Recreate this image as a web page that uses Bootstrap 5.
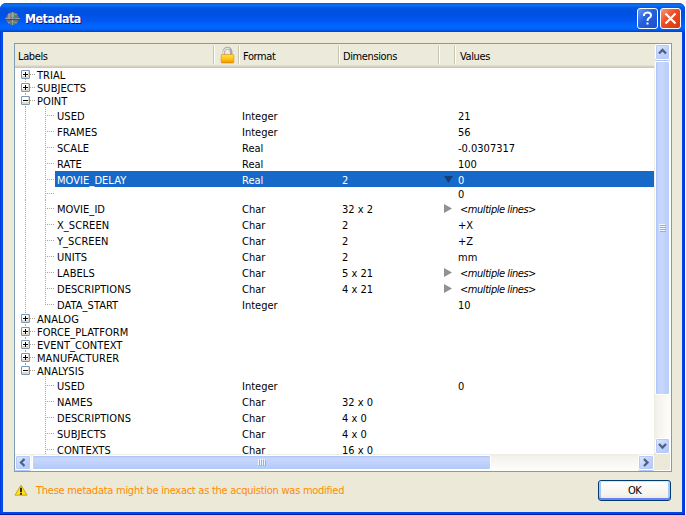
<!DOCTYPE html>
<html lang="en">
<head>
<meta charset="utf-8">
<title>Metadata</title>
<link href="https://cdn.jsdelivr.net/npm/bootstrap@5.3.0/dist/css/bootstrap.min.css" rel="stylesheet">
<style>
body{width:686px;height:515px;overflow:hidden;background:#fff;padding-top:3px;color:#000;font:11px/13px "DejaVu Sans Condensed","DejaVu Sans",sans-serif;font-stretch:condensed}
.defs{position:absolute;width:0;height:0}
.win{width:685px;height:512px;background:linear-gradient(90deg,#0029c8 0,#0050f0 1px,#0048e8 3px,#0048e8 682px,#0030d8 685px);border-radius:6px 6px 0 0;border-bottom:1px solid #0020a0}
.titlebar{height:29px;padding:2px 4px 0 5px;border-radius:6px 6px 0 0;background:linear-gradient(#0058d8 0,#0c73f5 2px,#0055e5 5px,#0050e0 10px,#0056ee 17px,#0066ff 23px,#0064fa 26px,#0040c8 29px)}
.titlebar h1{font:bold 12.3px/16px "DejaVu Sans Condensed","DejaVu Sans",sans-serif;font-stretch:condensed;letter-spacing:-.45px;color:#fff;text-shadow:1px 1px #0f1089;margin-left:5px;padding-top:1px}
.tb{width:21px;height:21px;padding:0;border:1px solid #fff;border-radius:3px;background:linear-gradient(135deg,#6c97f3,#2560dc 45%,#1c50cc)}
.tb.help-w{margin-right:2px}
.tb.close-w{background:linear-gradient(135deg,#f49a7c,#ee4a24 45%,#d8380e)}
.client{width:679px;height:480px;margin-left:3px;padding:11px 11px 0;background:#ece9d8}
.frame{width:658px;height:429px;border:1px solid #7f9db9;background:#fff}
.view{width:639px;height:410px;overflow:hidden}
.thead{height:24px;background:linear-gradient(#ebeadb 21px,#e2decd 21px,#e2decd 22px,#d6d2c2 22px,#d6d2c2 23px,#cbc7b8 23px);letter-spacing:-.38px}
.thead>div{height:18px;margin-top:2px;padding:4px 0 0 4px;border-right:1px solid #fff;box-shadow:inset -1px 0 #c7c5b2}
.thead>div:last-child{border:0;box-shadow:none}
.thead>.cl{width:200px;padding-left:3px}.ck{width:25px}.cf{width:100px}.cd{width:100px}.ca{width:16px}.cv{flex:1}
.thead>.cf,.thead>.cd{padding-left:3px}
.line{height:16px;line-height:20px;white-space:pre}
.line.top-l{height:13px;line-height:15px}
.line.extra{height:13px;line-height:16px}
.gut{width:40px;height:100%;flex:none;background:repeating-linear-gradient(#aca899 0 1px,transparent 1px 2px) 10px 0/1px 100% no-repeat,repeating-linear-gradient(#aca899 0 1px,transparent 1px 2px) 30px 0/1px 100% no-repeat,repeating-linear-gradient(90deg,#aca899 0 1px,transparent 1px 2px) 30px 8px/9px 1px no-repeat}
.end .gut{background-size:1px 100%,1px 8px,9px 1px}
.in .gut{background-size:0 0,1px 100%,9px 1px}
.extra .gut{background-position:10px 0,30px 0,30px 6px}
.top-l .gut{width:20px;padding:2px 0 0 6px;background:repeating-linear-gradient(#aca899 0 1px,transparent 1px 2px) 10px 0/1px 100% no-repeat,repeating-linear-gradient(90deg,#aca899 0 1px,transparent 1px 2px) 15px 6px/5px 1px no-repeat}
.top-l.first .gut{background-position:10px 7px,15px 6px}
.top-l.final .gut{background-size:1px 5px,5px 1px}
.top-l .n{padding-left:2px}
.exp{display:block;width:9px;height:9px}
.cells{flex:1}
.line .n{width:187px;padding-left:2px;letter-spacing:.06px}
.line .f{width:100px}.line .d{width:102px}.line .a{width:14px}
.line span{flex:none}
.sel{background:#1669c8;color:#fff}
.line i{font-style:oblique;padding-left:2px;letter-spacing:-.45px}
.a svg{display:block;margin-top:4px}
.a svg.down{margin-top:3px}
.vbar{width:17px;height:410px;background:linear-gradient(90deg,#eeede5,#f4f3ee 4px,#fefefb)}
.hbar{width:639px;height:17px;background:linear-gradient(#eeede5,#f4f3ee 4px,#fefefb)}
.sb{width:15px;height:16px;flex:none;border:1px solid #fff;border-radius:2px;background:linear-gradient(135deg,#e1eafe,#c3d3fd 50%,#aec8f7);box-shadow:inset 0 0 0 1px #b8cbf6,0 1px #b0c8f0}
.vthumb{width:15px;height:334px;margin-top:1px;border:1px solid #fff;border-radius:2px;background:linear-gradient(90deg,#a9c4f7,#c2d3fd 2px,#c8d6fb 6px,#b9cffc 12px)}
.hthumb{width:459px;height:15px;margin-left:1px;border:1px solid #fff;border-radius:2px;background:linear-gradient(#a9c4f7,#c8d6fb 2px,#c2d3fd 6px,#b4cbfa 12px)}
.hbar .sb{width:16px;height:15px}
.corner{width:17px;height:17px;background:#ece9d8;border:solid #fff;border-width:0 1px 1px 0}
.warn{color:#ff8c00;letter-spacing:-.26px;padding-left:8px}
.okb{width:73px;height:21px;padding:0;border:1px solid #003c74;border-radius:3px;background:linear-gradient(#fff,#f5f4ee 70%,#e8e5da);box-shadow:inset 0 1px #cee7ff,inset 0 -2px #6982ee,inset 2px 0 #a8c5f4,inset -2px 0 #a8c5f4;font:inherit;letter-spacing:-.6px;line-height:19px;color:#000}
</style>
</head>
<body>
<svg class="defs" xmlns="http://www.w3.org/2000/svg">
<linearGradient id="lg" x2="0" y2="1"><stop stop-color="#ffe04a"/><stop offset=".55" stop-color="#ffc414"/><stop offset="1" stop-color="#f09000"/></linearGradient>
<symbol id="plus" viewBox="0 0 9 9"><rect x=".5" y=".5" width="8" height="8" rx=".5" fill="#dfdacd" stroke="#7898b5"/><path d="M1 1h6v5H1z" fill="#fff"/><path d="M2 4.500h5M4.500 2v5" stroke="#000"/></symbol>
<symbol id="minus" viewBox="0 0 9 9"><rect x=".5" y=".5" width="8" height="8" rx=".5" fill="#dfdacd" stroke="#7898b5"/><path d="M1 1h6v5H1z" fill="#fff"/><path d="M2 4.500h5" stroke="#000"/></symbol>
<symbol id="tri" viewBox="0 0 8 9"><path d="M0 0L8 4.500L0 9z" fill="#919191"/></symbol>
</svg>
<div class="win">
 <div class="titlebar d-flex align-items-center">
  <svg width="15" height="15" viewBox="0 0 15 15"><circle cx="7.500" cy="7.500" r="6.500" fill="#63737c"/><path d="M3 3.500Q7 .5 11 3L9 6 5 7 2.500 10z" fill="#829ca3"/><path d="M0 7.500h15M7.500 1v13M3 3q4.500 3 9 0M3 12q4.500-3 9 0" fill="none" stroke="#a2aab3" stroke-width=".8"/><path d="M6 2v11" stroke="#a3564f" stroke-width=".8"/><path d="M9.500 2v11" stroke="#459163" stroke-width=".8"/><path d="M1 8.500h13" stroke="#404b70"/></svg>
  <h1 class="mb-0 flex-grow-1">Metadata</h1>
  <div class="d-flex align-items-center">
   <button class="tb help-w d-flex" aria-label="Help"><svg width="19" height="19" viewBox="0 0 19 19"><path d="M6 7V5.500Q7 3.500 9.500 3.500 13 3.500 13 6.500 13 8 10.800 9.200 9.500 10 9.500 12" fill="none" stroke="#fff" stroke-width="2"/><path d="M8.500 13.500h2v2h-2z" fill="#fff"/></svg></button>
   <button class="tb close-w d-flex" aria-label="Close"><svg width="19" height="19" viewBox="0 0 19 19"><path d="M4.500 4.500l10 10M14.500 4.500l-10 10" stroke="#fff" stroke-width="2.200"/></svg></button>
  </div>
 </div>
 <div class="client">
  <div class="frame d-flex flex-wrap align-content-start">
   <div class="view">
    <div class="thead d-flex"><div class="cl">Labels</div><div class="ck pt-0"><svg class="d-block" width="17" height="18" viewBox="0 0 16 17"><path d="M4.500 8V5.500a3.500 3.500 0 0 1 7 0V8" fill="none" stroke="#a9a9a9" stroke-width="2.400"/><path d="M4.300 8V5.500a3.500 3.500 0 0 1 5.700-2.500" fill="none" stroke="#e8e8e8"/><rect x="2" y="8" width="12" height="8" rx="1" fill="url(#lg)" stroke="#d38a12" stroke-width=".6"/></svg></div><div class="cf">Format</div><div class="cd">Dimensions</div><div class="ca"></div><div class="cv">Values</div></div>
    <div class="line top-l first d-flex"><span class="gut"><svg class="exp"><use href="#plus"/></svg></span><span class="n">TRIAL</span></div>
    <div class="line top-l d-flex"><span class="gut"><svg class="exp"><use href="#plus"/></svg></span><span class="n">SUBJECTS</span></div>
    <div class="line top-l d-flex"><span class="gut"><svg class="exp"><use href="#minus"/></svg></span><span class="n">POINT</span></div>
    <div class="line d-flex"><span class="gut"></span><div class="cells d-flex"><span class="n">USED</span><span class="f">Integer</span><span class="d"></span><span class="a"></span><span class="v">21</span></div></div>
    <div class="line d-flex"><span class="gut"></span><div class="cells d-flex"><span class="n">FRAMES</span><span class="f">Integer</span><span class="d"></span><span class="a"></span><span class="v">56</span></div></div>
    <div class="line d-flex"><span class="gut"></span><div class="cells d-flex"><span class="n">SCALE</span><span class="f">Real</span><span class="d"></span><span class="a"></span><span class="v">-0.0307317</span></div></div>
    <div class="line d-flex"><span class="gut"></span><div class="cells d-flex"><span class="n">RATE</span><span class="f">Real</span><span class="d"></span><span class="a"></span><span class="v">100</span></div></div>
    <div class="line d-flex"><span class="gut"></span><div class="cells sel d-flex"><span class="n">MOVIE_DELAY</span><span class="f">Real</span><span class="d">2</span><span class="a"><svg class="down" width="9" height="10" viewBox="0 0 9 10"><path d="M0 2h9L4.500 9z" fill="#123f78"/></svg></span><span class="v">0</span></div></div>
    <div class="line extra d-flex"><span class="gut"></span><div class="cells d-flex"><span class="n"></span><span class="f"></span><span class="d"></span><span class="a"></span><span class="v">0</span></div></div>
    <div class="line d-flex"><span class="gut"></span><div class="cells d-flex"><span class="n">MOVIE_ID</span><span class="f">Char</span><span class="d">32 x 2</span><span class="a"><svg width="8" height="9"><use href="#tri"/></svg></span><span class="v"><i>&lt;multiple lines&gt;</i></span></div></div>
    <div class="line d-flex"><span class="gut"></span><div class="cells d-flex"><span class="n">X_SCREEN</span><span class="f">Char</span><span class="d">2</span><span class="a"></span><span class="v">+X</span></div></div>
    <div class="line d-flex"><span class="gut"></span><div class="cells d-flex"><span class="n">Y_SCREEN</span><span class="f">Char</span><span class="d">2</span><span class="a"></span><span class="v">+Z</span></div></div>
    <div class="line d-flex"><span class="gut"></span><div class="cells d-flex"><span class="n">UNITS</span><span class="f">Char</span><span class="d">2</span><span class="a"></span><span class="v">mm</span></div></div>
    <div class="line d-flex"><span class="gut"></span><div class="cells d-flex"><span class="n">LABELS</span><span class="f">Char</span><span class="d">5 x 21</span><span class="a"><svg width="8" height="9"><use href="#tri"/></svg></span><span class="v"><i>&lt;multiple lines&gt;</i></span></div></div>
    <div class="line d-flex"><span class="gut"></span><div class="cells d-flex"><span class="n">DESCRIPTIONS</span><span class="f">Char</span><span class="d">4 x 21</span><span class="a"><svg width="8" height="9"><use href="#tri"/></svg></span><span class="v"><i>&lt;multiple lines&gt;</i></span></div></div>
    <div class="line end d-flex"><span class="gut"></span><div class="cells d-flex"><span class="n">DATA_START</span><span class="f">Integer</span><span class="d"></span><span class="a"></span><span class="v">10</span></div></div>
    <div class="line top-l d-flex"><span class="gut"><svg class="exp"><use href="#plus"/></svg></span><span class="n">ANALOG</span></div>
    <div class="line top-l d-flex"><span class="gut"><svg class="exp"><use href="#plus"/></svg></span><span class="n">FORCE_PLATFORM</span></div>
    <div class="line top-l d-flex"><span class="gut"><svg class="exp"><use href="#plus"/></svg></span><span class="n">EVENT_CONTEXT</span></div>
    <div class="line top-l d-flex"><span class="gut"><svg class="exp"><use href="#plus"/></svg></span><span class="n">MANUFACTURER</span></div>
    <div class="line top-l final d-flex"><span class="gut"><svg class="exp"><use href="#minus"/></svg></span><span class="n">ANALYSIS</span></div>
    <div class="line in d-flex"><span class="gut"></span><div class="cells d-flex"><span class="n">USED</span><span class="f">Integer</span><span class="d"></span><span class="a"></span><span class="v">0</span></div></div>
    <div class="line in d-flex"><span class="gut"></span><div class="cells d-flex"><span class="n">NAMES</span><span class="f">Char</span><span class="d">32 x 0</span></div></div>
    <div class="line in d-flex"><span class="gut"></span><div class="cells d-flex"><span class="n">DESCRIPTIONS</span><span class="f">Char</span><span class="d">4 x 0</span></div></div>
    <div class="line in d-flex"><span class="gut"></span><div class="cells d-flex"><span class="n">SUBJECTS</span><span class="f">Char</span><span class="d">4 x 0</span></div></div>
    <div class="line in d-flex"><span class="gut"></span><div class="cells d-flex"><span class="n">CONTEXTS</span><span class="f">Char</span><span class="d">16 x 0</span></div></div>
   </div>
   <div class="vbar d-flex flex-column align-items-center">
    <div class="sb d-flex"><svg width="13" height="13"><path d="M3 8.500L6.500 5 10 8.500" fill="none" stroke="#4d6185" stroke-width="2.300"/></svg></div>
    <div class="vthumb mb-auto d-flex align-items-center justify-content-center"><svg width="7" height="8"><path d="M0 .5h6M0 2.500h6M0 4.500h6M0 6.500h6" stroke="#eef4fe"/><path d="M1 1.500h6M1 3.500h6M1 5.500h6M1 7.500h6" stroke="#8cb0f8"/></svg></div>
    <div class="sb d-flex"><svg width="13" height="13"><path d="M3 5L6.500 8.500 10 5" fill="none" stroke="#4d6185" stroke-width="2.300"/></svg></div>
   </div>
   <div class="hbar d-flex align-items-center">
    <div class="sb d-flex"><svg width="13" height="13"><path d="M8.500 3L5 6.500 8.500 10" fill="none" stroke="#4d6185" stroke-width="2.300"/></svg></div>
    <div class="hthumb me-auto d-flex align-items-center justify-content-center"><svg width="8" height="7"><path d="M.5 0v6M2.500 0v6M4.500 0v6M6.500 0v6" stroke="#eef4fe"/><path d="M1.500 1v6M3.500 1v6M5.500 1v6M7.500 1v6" stroke="#8cb0f8"/></svg></div>
    <div class="sb d-flex"><svg width="13" height="13"><path d="M5 3l3.500 3.500L5 10" fill="none" stroke="#4d6185" stroke-width="2.300"/></svg></div>
   </div>
   <div class="corner"></div>
  </div>
  <div class="d-flex align-items-center pt-2">
   <svg width="14" height="13" viewBox="0 0 15 13"><path d="M7.500.8L14 11.500H1z" fill="#ffe01c" stroke="#c9a300" stroke-linejoin="round"/><path d="M6.500 3.500h2v4.500h-2zM6.500 9h2v2h-2z" fill="#222"/></svg>
   <span class="warn me-auto">These metadata might be inexact as the acquistion was modified</span>
   <button class="okb">OK</button>
  </div>
 </div>
</div>
<script src="https://cdn.jsdelivr.net/npm/bootstrap@5.3.0/dist/js/bootstrap.bundle.min.js"></script>
</body>
</html>
